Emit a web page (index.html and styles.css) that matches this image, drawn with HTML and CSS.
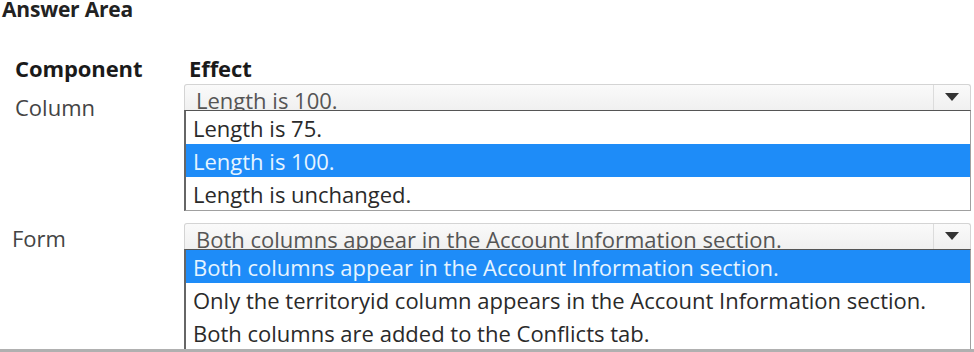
FILE: index.html
```html
<!DOCTYPE html>
<html>
<head>
<meta charset="utf-8">
<link rel="stylesheet" href="styles.css">
</head>
<body>
<div class="page">
  <h1 class="title">Answer Area</h1>
  <div class="table">
    <div class="head-row">
      <div class="col-label">Component</div>
      <div class="col-effect">Effect</div>
    </div>
    <div class="row row-column">
      <div class="label">Column</div>
      <div class="select">
        <div class="select-head">
          <span class="select-value">Length is 100.</span>
          <span class="select-btn"><svg width="14" height="8" viewBox="0 0 14 8"><path d="M0 0H14L7 8Z" fill="#333"/></svg></span>
        </div>
        <ul class="select-list">
          <li>Length is 75.</li>
          <li class="sel">Length is 100.</li>
          <li>Length is unchanged.</li>
        </ul>
      </div>
    </div>
    <div class="row row-form">
      <div class="label label-form">Form</div>
      <div class="select">
        <div class="select-head">
          <span class="select-value">Both columns appear in the Account Information section.</span>
          <span class="select-btn"><svg width="14" height="8" viewBox="0 0 14 8"><path d="M0 0H14L7 8Z" fill="#333"/></svg></span>
        </div>
        <ul class="select-list">
          <li class="sel">Both columns appear in the Account Information section.</li>
          <li>Only the territoryid column appears in the Account Information section.</li>
          <li>Both columns are added to the Conflicts tab.</li>
        </ul>
      </div>
    </div>
  </div>
</div>
</body>
</html>
```

FILE: styles.css
```css
* { box-sizing: border-box; }
html, body { margin: 0; padding: 0; background: #fff; }
body {
  width: 974px;
  height: 352px;
  overflow: hidden;
  font-family: "Open Sans", "Noto Sans", sans-serif;
  color: #333;
}
.page {
  height: 352px;
  border-bottom: 3px solid #b0b0b0;
  display: flex;
  flex-direction: column;
  overflow: hidden;
}
.title {
  margin: 0;
  padding: 0 0 0 2px;
  font-size: 21px;
  line-height: 18px;
  height: 18px;
  font-weight: 700;
  color: #222;
  letter-spacing: -0.2px;
}
.table {
  display: flex;
  flex-direction: column;
  padding-top: 35px;
}
.head-row {
  display: flex;
  font-weight: 700;
  font-size: 22px;
  line-height: 30px;
  color: #1a1a1a;
  height: 31px;
}
.col-label { width: 189px; padding-left: 15px; letter-spacing: -0.1px; }
.col-effect { letter-spacing: -0.1px; }
.row {
  display: flex;
  align-items: flex-start;
}
.label {
  width: 184px;
  padding-left: 15px;
  padding-top: 8px;
  font-size: 22px;
  line-height: 30px;
  color: #444;
}
.label-form { padding-left: 12px; padding-top: 0; }
.row-form { margin-top: 12px; }
.select {
  width: 787px;
  display: flex;
  flex-direction: column;
}
.select-head {
  height: 26px;
  display: flex;
  border: 1px solid #d4d4d4;
  border-bottom: none;
  border-radius: 3px 3px 0 0;
  background: linear-gradient(#fafafa, #f0f0f0);
  overflow: hidden;
}
.select-value {
  flex: 1;
  padding-left: 11px;
  font-size: 22px;
  line-height: 30px;
  color: #555;
  white-space: nowrap;
}
.select-btn {
  width: 37px;
  border-left: 1px solid #dcdcdc;
  display: flex;
  justify-content: center;
  padding-top: 8px;
}
.select-list {
  list-style: none;
  margin: 0;
  padding: 0;
  border: 1px solid #a0a0a0;
  border-left: 2px solid #666;
  border-top: 1px solid #555;
  background: #fff;
}
.select-list li {
  height: 33px;
  padding-left: 7px;
  padding-top: 1px;
  font-size: 22px;
  line-height: 32px;
  color: #2a2a2a;
  white-space: nowrap;
}
.select-list li.sel {
  background: #1e8cf8;
  color: #e6f4ff;
}
```
